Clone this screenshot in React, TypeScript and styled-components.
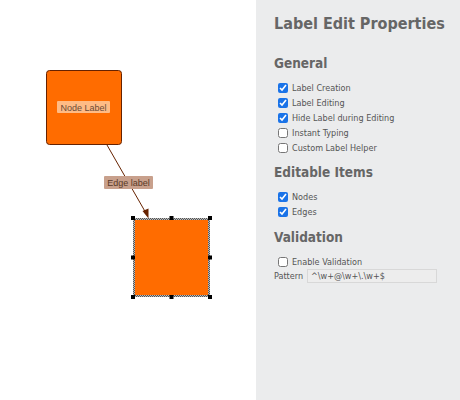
import styled, { createGlobalStyle } from "styled-components";

const GlobalStyle = createGlobalStyle`
  html, body {
    margin: 0;
    padding: 0;
    background: #ffffff;
  }
  #root {
    height: 400px;
  }
`;

const Page = styled.div`
  display: flex;
  width: 460px;
  height: 400px;
  overflow: hidden;
`;

const Canvas = styled.div`
  width: 256px;
  height: 400px;
  flex-shrink: 0;
  background: #ffffff;
`;

const Sidebar = styled.aside`
  flex: 1;
  background: #ebeced;
  padding: 14px 0 0 18px;
  font-family: "DejaVu Sans Condensed", "DejaVu Sans", Verdana, sans-serif;
  color: #666666;
  box-sizing: border-box;
`;

const Title = styled.h1`
  margin: 0 0 20px;
  font-size: 16px;
  font-weight: 700;
  line-height: 20px;
  color: #666666;
`;

const Section = styled.h2`
  margin: 0 0 9px;
  font-size: 13.5px;
  font-weight: 700;
  line-height: 18px;
  color: #666666;
`;

const Options = styled.div<{ $last?: boolean }>`
  display: flex;
  flex-direction: column;
  margin: 0 0 ${(p) => (p.$last ? "0" : "8px")} 4px;
`;

const Option = styled.label`
  display: flex;
  align-items: center;
  gap: 4px;
  height: 14.8px;
  font-size: 9px;
  color: #555555;

  input {
    margin: 0;
    width: 10px;
    height: 10px;
    accent-color: #1a73e8;
  }
`;

const PatternRow = styled.div`
  display: flex;
  align-items: center;
  gap: 4px;
  height: 14px;
  font-size: 9px;
  color: #555555;
`;

const PatternInput = styled.input`
  width: 130px;
  height: 14px;
  box-sizing: border-box;
  border: 1px solid #d8d8d8;
  background: #ededed;
  font-family: "DejaVu Sans Condensed", "DejaVu Sans", Verdana, sans-serif;
  font-size: 9px;
  color: #555555;
  padding: 0 3px;
  outline: none;
`;

function Graph() {
  const handles = [
    [133, 218], [171.5, 218], [210, 218],
    [133, 257.5], [210, 257.5],
    [133, 297], [171.5, 297], [210, 297],
  ];
  return (
    <svg width="256" height="400" viewBox="0 0 256 400">
      <defs>
        <pattern id="dash" width="2" height="2" patternUnits="userSpaceOnUse">
          <rect width="2" height="2" fill="#bbbbbb" />
          <rect width="1" height="1" fill="#555555" />
          <rect x="1" y="1" width="1" height="1" fill="#555555" />
        </pattern>
      </defs>
      <rect x="46.5" y="70.5" width="75" height="74" rx="3" fill="#ff6c00" stroke="#662200" strokeWidth="1" />
      <rect x="57" y="101" width="53" height="12" rx="1" fill="#ffc494" opacity="0.9" />
      <text x="83.5" y="110.5" textAnchor="middle" fontFamily="Liberation Sans, Arial, sans-serif" fontSize="9" fill="#6a4a36">Node Label</text>

      <line x1="107" y1="145" x2="146.5" y2="214" stroke="#662200" strokeWidth="1" />
      <polygon points="148.5,218.5 142.5,211 148.5,208.5" fill="#662200" />
      <rect x="104" y="176" width="49" height="13" rx="1" fill="#c8a08c" />
      <text x="128.5" y="186" textAnchor="middle" fontFamily="Liberation Sans, Arial, sans-serif" fontSize="9" fill="#5a3a26">Edge label</text>

      <rect x="133" y="218" width="77" height="79" fill="url(#dash)" />
      <rect x="135" y="220" width="73" height="75" fill="#ff6c00" />
      {handles.map(([x, y], i) => (
        <rect key={i} x={x - 2} y={y - 2} width="4" height="4" fill="#000000" />
      ))}
    </svg>
  );
}

export default function App() {
  return (
    <>
      <GlobalStyle />
      <Page>
        <Canvas>
          <Graph />
        </Canvas>
        <Sidebar>
          <Title>Label Edit Properties</Title>
          <Section>General</Section>
          <Options>
            <Option><input type="checkbox" defaultChecked />Label Creation</Option>
            <Option><input type="checkbox" defaultChecked />Label Editing</Option>
            <Option><input type="checkbox" defaultChecked />Hide Label during Editing</Option>
            <Option><input type="checkbox" />Instant Typing</Option>
            <Option><input type="checkbox" />Custom Label Helper</Option>
          </Options>
          <Section>Editable Items</Section>
          <Options>
            <Option><input type="checkbox" defaultChecked />Nodes</Option>
            <Option><input type="checkbox" defaultChecked />Edges</Option>
          </Options>
          <Section>Validation</Section>
          <Options $last>
            <Option><input type="checkbox" />Enable Validation</Option>
          </Options>
          <PatternRow>
            Pattern
            <PatternInput defaultValue="^\w+@\w+\.\w+$" />
          </PatternRow>
        </Sidebar>
      </Page>
    </>
  );
}
